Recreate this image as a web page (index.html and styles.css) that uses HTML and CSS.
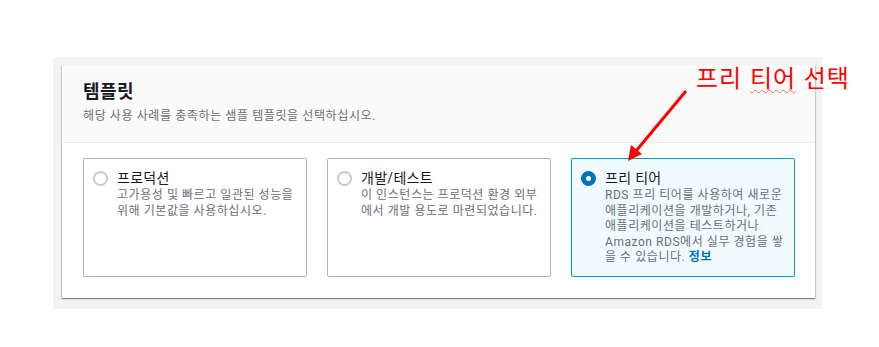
FILE: index.html
```html
<!DOCTYPE html>
<html lang="ko">
<head>
    <meta charset="UTF-8">
    <meta name="viewport" content="width=device-width, initial-scale=1.0">
    <title>템플릿</title>
    <link rel="stylesheet" href="styles.css">
</head>
<body>
    <div class="page">
        <div class="backdrop">
            <div class="panel">
                <div class="panel-header">
                    <h2>템플릿</h2>
                    <p>해당 사용 사례를 충족하는 샘플 템플릿을 선택하십시오.</p>
                </div>
                <div class="panel-body">
                    <label class="tile">
                        <span class="radio"></span>
                        <span class="tile-text">
                            <span class="tile-title">프로덕션</span>
                            <span class="tile-desc">고가용성 및 빠르고 일관된 성능을<br>위해 기본값을 사용하십시오.</span>
                        </span>
                    </label>
                    <label class="tile">
                        <span class="radio"></span>
                        <span class="tile-text">
                            <span class="tile-title">개발/테스트</span>
                            <span class="tile-desc">이 인스턴스는 프로덕션 환경 외부<br>에서 개발 용도로 마련되었습니다.</span>
                        </span>
                    </label>
                    <label class="tile selected">
                        <span class="radio"></span>
                        <span class="tile-text">
                            <span class="tile-title">프리 티어</span>
                            <span class="tile-desc">RDS 프리 티어를 사용하여 새로운<br>애플리케이션을 개발하거나, 기존<br>애플리케이션을 테스트하거나<br>Amazon RDS에서 실무 경험을 쌓<br>을 수 있습니다. <a href="#">정보</a></span>
                        </span>
                    </label>
                </div>
            </div>
        </div>
    </div>

    <!-- annotation drawn over the screenshot -->
    <div class="note">프리 <span class="typo">티어</span> 선택</div>
    <svg class="arrow" width="879" height="347" viewBox="0 0 879 347">
        <line x1="686" y1="91" x2="636" y2="151" stroke="#ff0000" stroke-width="3"/>
        <polygon points="628,161 631,145 642,154" fill="#ff0000"/>
    </svg>
</body>
</html>
```

FILE: styles.css
```css
body {
    margin: 0;
    background: #fff;
    font-family: Roboto, "Noto Sans CJK KR", sans-serif;
    color: #16191f;
}
.page {
    padding: 57px 0 0 53px;
}
.backdrop {
    width: 769px;
    box-sizing: border-box;
    background: #f2f3f3;
    padding: 8px 7px 11px 9px;
}
.panel {
    background: #fff;
    box-shadow: 0 1px 1px 0 rgba(0, 28, 36, 0.3), 1px 1px 1px 0 rgba(0, 28, 36, 0.15), -1px 1px 1px 0 rgba(0, 28, 36, 0.15);
}
.panel-header {
    background: #fafafa;
    border-bottom: 1px solid #eaeded;
    padding: 15px 20px 18px 21px;
}
.panel-header h2 {
    margin: 0;
    font-size: 18px;
    line-height: 24px;
    font-weight: 700;
    letter-spacing: 0.5px;
}
.panel-header p {
    margin: 4px 0 0;
    font-size: 12px;
    line-height: 16px;
    color: #687078;
    letter-spacing: 0.6px;
}
.panel-body {
    display: grid;
    grid-template-columns: repeat(3, 1fr);
    gap: 20px;
    padding: 15px 20px 21px 21px;
}
.tile {
    display: flex;
    gap: 9px;
    border: 1px solid #aab7b8;
    border-radius: 2px;
    padding: 9px 10px 10px 9px;
    cursor: pointer;
}
.tile.selected {
    background: #f1faff;
    border-color: #00a1c9;
}
.radio {
    flex: none;
    width: 15px;
    height: 15px;
    box-sizing: border-box;
    margin-top: 3px;
    border: 2px solid #c4cdcf;
    border-radius: 50%;
    background: #fff;
}
.tile.selected .radio {
    border: 5px solid #0073bb;
}
.tile-text {
    display: flex;
    flex-direction: column;
}
.tile-title {
    font-size: 14px;
    line-height: 20px;
    letter-spacing: 0.3px;
}
.tile-desc {
    font-size: 12px;
    line-height: 15.5px;
    color: #687078;
    white-space: nowrap;
    letter-spacing: 0.55px;
}
.tile-desc a {
    color: #0073bb;
    font-weight: 700;
    text-decoration: none;
}
.note {
    position: absolute;
    left: 696px;
    top: 63px;
    font-family: "Noto Sans CJK KR", sans-serif;
    font-size: 24px;
    line-height: 28px;
    color: #ff0000;
    letter-spacing: 1px;
}
.typo {
    text-decoration: underline wavy #f07070;
    text-decoration-thickness: 1px;
    text-underline-offset: 2px;
}
.arrow {
    position: absolute;
    left: 0;
    top: 0;
    pointer-events: none;
}
```
